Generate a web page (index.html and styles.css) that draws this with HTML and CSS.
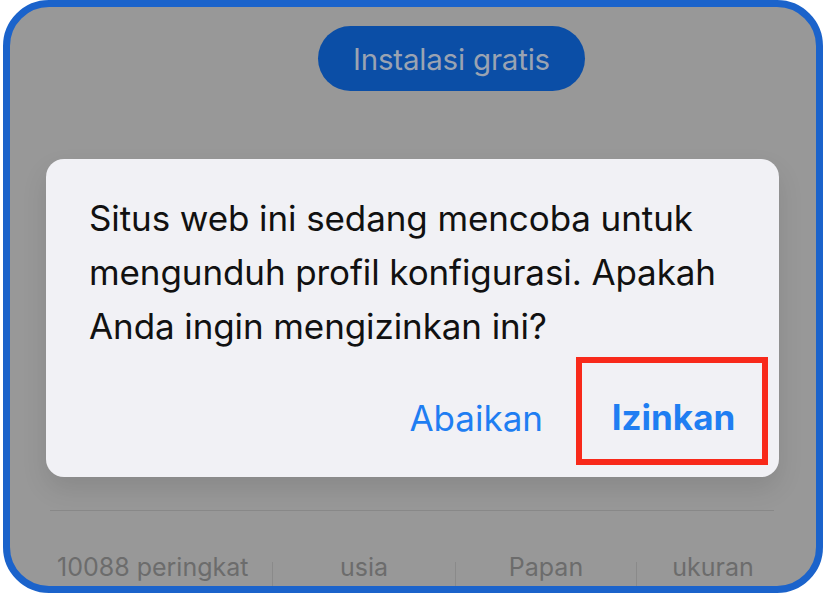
FILE: index.html
```html
<!DOCTYPE html>
<html lang="id">
<head>
<meta charset="utf-8">
<link rel="stylesheet" href="styles.css">
</head>
<body>
<div class="frame">
  <div class="top">
    <div class="install">Instalasi gratis</div>
  </div>
  <div class="dialog">
    <p class="msg">Situs web ini sedang mencoba untuk mengunduh profil konfigurasi. Apakah Anda ingin mengizinkan ini?</p>
    <div class="actions">
      <span class="btn secondary">Abaikan</span>
      <span class="btn primary">Izinkan</span>
    </div>
  </div>
  <div class="rule"></div>
  <div class="stats">
    <span class="stat s1">10088 peringkat</span>
    <span class="sep"></span>
    <span class="stat s2">usia</span>
    <span class="sep"></span>
    <span class="stat s3">Papan</span>
    <span class="sep"></span>
    <span class="stat s4">ukuran</span>
  </div>
</div>
</body>
</html>
```

FILE: styles.css
```css
* { box-sizing: border-box; }
html, body { margin: 0; padding: 0; background: #ffffff; }
body { width: 823px; height: 594px; overflow: hidden; font-family: Inter, "Liberation Sans", sans-serif; }

.frame {
  margin-left: 3px;
  width: 820px;
  height: 593px;
  border: 7px solid #1b63cb;
  border-radius: 46px;
  background: #989898;
  overflow: hidden;
  display: flex;
  flex-direction: column;
}

.top { display: flex; padding-left: 308px; padding-top: 19px; }
.install {
  width: 267px;
  height: 65px;
  border-radius: 33px;
  background: #0b4ea6;
  color: #9aa3b2;
  font-size: 29.5px;
  display: flex;
  align-items: center;
  justify-content: center;
  letter-spacing: -0.2px;
}

.dialog {
  margin-top: 68px;
  margin-left: 36px;
  width: 733px;
  height: 318px;
  flex-shrink: 0;
  background: #f1f1f5;
  border-radius: 18px;
  box-shadow: 0 12px 26px rgba(0,0,0,0.10);
  padding: 32px 40px 0 43px;
  display: flex;
  flex-direction: column;
}
.msg {
  margin: 0;
  font-size: 35px;
  line-height: 54px;
  color: #111111;
  letter-spacing: -0.1px;
}
.actions {
  display: flex;
  justify-content: flex-end;
  align-items: center;
  margin-top: 4px;
  height: 108px;
}
.btn {
  color: #1f7ef2;
  font-size: 35px;
  line-height: 50px;
}
.secondary { margin-right: 33px; padding-top: 14px; }
.primary {
  font-weight: 700;
  border: 6px solid #f8291a;
  width: 192px;
  height: 108px;
  display: flex;
  align-items: center;
  justify-content: center;
  padding-top: 12px;
  padding-left: 3px;
  margin-right: -29px;
}

.rule {
  margin-top: 33px;
  margin-left: 40px;
  width: 724px;
  height: 1px;
  flex-shrink: 0;
  background: #888888;
}

.stats {
  display: flex;
  align-items: flex-start;
  margin-top: 36px;
  height: 45px;
  flex-shrink: 0;
  color: #6c6c6c;
  font-size: 25px;
}
.stat { line-height: 28px; padding-top: 6px; text-align: center; }
.s1 { width: 262px; padding-left: 47px; text-align: left; }
.s2 { width: 182px; }
.s3 { width: 180px; }
.s4 { width: 152px; }
.sep { width: 1px; height: 30px; margin-top: 15px; background: #8a8a8a; }
```
